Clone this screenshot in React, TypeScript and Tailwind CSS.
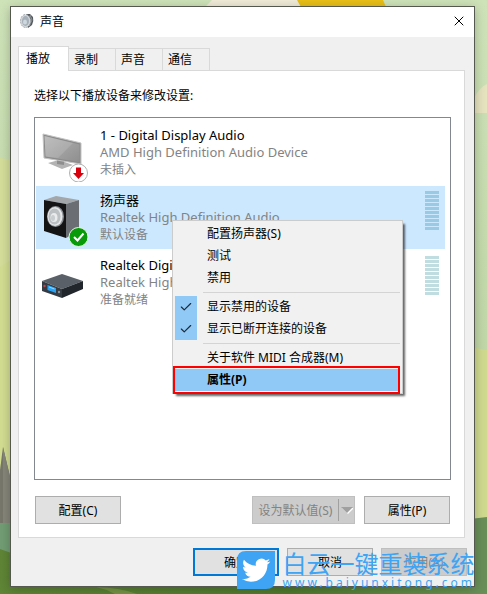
import { useState } from "react";
import type { ReactNode } from "react";
import { Check, X } from "lucide-react";

interface Device {
  id: string;
  name: string;
  driver: string;
  status: string;
  icon: ReactNode;
  meter?: string;
}

function Scenery() {
  return (
    <svg
      className="absolute inset-0 h-full w-full"
      viewBox="0 0 487 594"
      preserveAspectRatio="none"
      aria-hidden="true"
    >
      <defs>
        <linearGradient id="sky" x1="0" y1="0" x2="0" y2="1">
          <stop offset="0" stopColor="#cfe3b9" />
          <stop offset="1" stopColor="#b5ce9b" />
        </linearGradient>
        <linearGradient id="grass" x1="0" y1="0" x2="1" y2="0">
          <stop offset="0" stopColor="#5f8536" />
          <stop offset="0.6" stopColor="#4f7a2e" />
          <stop offset="1" stopColor="#6b9455" />
        </linearGradient>
      </defs>
      <rect width="487" height="594" fill="url(#sky)" />
      <path d="M212 0H298L301 7H205Z" fill="#f0ecd8" />
      <path d="M297 0H383L386 7H301Z" fill="#e9bf16" />
      <path d="M470 113Q474 90 487 84V113Z" fill="#e6e3bf" />
      <path d="M0 158L20 161V594H0Z" fill="#d5de9a" />
      <path d="M0 267L20 255V594H0Z" fill="#d3dd92" />
      <path d="M470 347L487 350V530H470Z" fill="#d0da8f" />
      <path d="M0 470L3 447L12 485V530H0Z" fill="#77776b" />
      <path d="M3 447L12 485V530H3Z" fill="#86867a" />
      <rect y="523" width="20" height="40" fill="#729d73" />
      <path d="M0 549L20 556L487 560V594H0Z" fill="url(#grass)" />
      <path d="M470 519L487 517V594H470Z" fill="#698f58" />
      <path d="M96 587Q122 588 137 594H115Q106 589 96 587Z" fill="#759445" />
    </svg>
  );
}

function SoundIcon() {
  return (
    <svg className="h-4 w-4" viewBox="0 0 16 16" aria-hidden="true">
      <path d="M7 1L11 1L14 4Q15 8 13 12L9 15Z" fill="#54595d" />
      <path d="M11 2L13 7L10 13" fill="none" stroke="#8d9498" />
      <ellipse cx="6.500" cy="8" rx="5" ry="6.500" fill="#d3d8dc" stroke="#a3a9ad" strokeDasharray="2 1" />
      <ellipse cx="6.500" cy="8" rx="3.500" ry="5" fill="#a6b0b8" />
      <ellipse cx="6" cy="9" rx="2" ry="2.500" fill="#cdd8df" />
    </svg>
  );
}

function MonitorIcon() {
  return (
    <svg className="h-[52px] w-12" viewBox="0 0 48 52" aria-hidden="true">
      <defs>
        <linearGradient id="screen" x1="0" y1="0" x2="1" y2="1">
          <stop offset="0" stopColor="#b5b5b5" />
          <stop offset="0.5" stopColor="#a2a2a2" />
          <stop offset="1" stopColor="#8f8f8f" />
        </linearGradient>
      </defs>
      <path d="M6 33L17 30L31 35L20 39Z" fill="#b3b3b3" />
      <path d="M15 27L22 29V35L15 34Z" fill="#8e8e8e" />
      <path d="M1 4L39 13V34L2 28Z" fill="#8b8b8b" stroke="#c4c4c4" />
      <path d="M2.500 6L37.500 14.500V32L3.500 26.500Z" fill="url(#screen)" />
      <path d="M2.500 6L31 13L16 28L3.500 26.500Z" fill="#fff" opacity="0.13" />
      <circle cx="36.500" cy="43" r="9" fill="#fff" stroke="#b0b0b0" />
      <path d="M34 37.500H39V43H42L36.500 49L31 43H34Z" fill="#d8000c" />
    </svg>
  );
}

function SpeakerIcon() {
  return (
    <svg className="h-[52px] w-12" viewBox="0 0 48 52" aria-hidden="true">
      <path d="M2 5L14 1L37 5L24 9Z" fill="#a4a7aa" />
      <path d="M24 9L37 5V36L24 43Z" fill="#6b6f74" />
      <path d="M2 5L24 9V43L2 36Z" fill="#141414" />
      <ellipse cx="13.500" cy="21.500" rx="8.500" ry="10.500" fill="#8e9296" />
      <ellipse cx="13" cy="21.500" rx="7.500" ry="9.500" fill="#e5e7e8" />
      <ellipse cx="12.500" cy="21.500" rx="6" ry="8" fill="#bcc0c3" />
      <ellipse cx="12" cy="22.500" rx="3.500" ry="4.500" fill="#e9ebec" />
      <ellipse cx="11" cy="23" rx="2" ry="3" fill="#c9cdd0" />
      <circle cx="36.500" cy="42" r="9.500" fill="#089a08" stroke="#e9f4e6" />
      <path d="M32 42L35.500 45.500L41.500 38.500" fill="none" stroke="#fff" strokeWidth="2" />
    </svg>
  );
}

function ReceiverIcon() {
  return (
    <svg className="h-[52px] w-12" viewBox="0 0 48 52" aria-hidden="true">
      <path d="M0 21L20 14L41 21L20 29Z" fill="#596067" />
      <path d="M0 21L20 29V38L0 31Z" fill="#343b42" />
      <path d="M20 29L41 21V29L20 38Z" fill="#20262c" />
      <path d="M5.500 25L14 28V33L5.500 30Z" fill="#2ba3f5" />
      <path d="M7 27L12.500 29" stroke="#9bd6ff" />
      <circle cx="2.500" cy="26" r="1.200" fill="#b34a4f" />
      <circle cx="17" cy="32" r="1.200" fill="#8a9299" />
    </svg>
  );
}

function LevelMeter({ color }: { color: string }) {
  return (
    <div className="mt-[5px] flex w-[14px] flex-col gap-px" aria-hidden="true">
      {Array.from({ length: 10 }, (_, i) => (
        <div key={i} className={`h-[3px] ${color}`} />
      ))}
    </div>
  );
}

function ContextMenu() {
  const [showDisabled, setShowDisabled] = useState(true);
  const [showDisconnected, setShowDisconnected] = useState(true);

  const toggles = [
    { label: "显示禁用的设备", checked: showDisabled, toggle: () => setShowDisabled(!showDisabled) },
    { label: "显示已断开连接的设备", checked: showDisconnected, toggle: () => setShowDisconnected(!showDisconnected) },
  ];

  return (
    <div
      role="menu"
      className="absolute top-[102px] left-[137px] z-10 flex w-[231px] flex-col border border-[#ccc] bg-[#f1f1f1] p-0.5 shadow-[3px_3px_2px_-1px_rgba(0,0,0,0.6)]"
    >
      {["配置扬声器(S)", "测试", "禁用"].map((label) => (
        <button key={label} role="menuitem" className="h-[22px] pb-0.5 pl-8 text-left">
          {label}
        </button>
      ))}
      <div role="separator" className="my-[3px] ml-7 h-px bg-[#d4d4d4]" />
      {toggles.map((item) => (
        <button
          key={item.label}
          role="menuitemcheckbox"
          aria-checked={item.checked}
          onClick={item.toggle}
          className="flex h-[22px] items-center gap-2.5 text-left"
        >
          <span className={`flex h-full w-[22px] items-center justify-center ${item.checked ? "bg-[#90c8f6]" : ""}`}>
            {item.checked && <Check className="h-3.5 w-3.5 text-[#1c2a38]" />}
          </span>
          <span className="pb-0.5">{item.label}</span>
        </button>
      ))}
      <div role="separator" className="my-[3px] ml-7 h-px bg-[#d4d4d4]" />
      <button role="menuitem" className="h-[22px] pb-0.5 pl-8 text-left">
        关于软件 MIDI 合成器(M)
      </button>
      <button role="menuitem" className="relative h-[22px] bg-[#90c8f6] pb-0.5 pl-8 text-left font-bold">
        属性(P)
        <span className="absolute -inset-y-[3px] right-0 -left-0.5 border-2 border-[#ff0000]" />
      </button>
    </div>
  );
}

function Watermark() {
  return (
    <div className="pointer-events-none absolute right-3 bottom-[5px] z-20 flex items-center gap-2 text-[#3ea4f3]">
      <svg className="h-[38px] w-[38px]" viewBox="0 0 38 38" aria-hidden="true">
        <path d="M9 0H38V29Q38 38 29 38H0V9Q0 0 9 0Z" fill="#3ea4f3" />
        <path
          transform="translate(5 5) scale(1.180)"
          fill="#fff"
          d="M23.953 4.570a10 10 0 01-2.825.775 4.958 4.958 0 002.163-2.723c-.951.555-2.005.959-3.127 1.184a4.920 4.920 0 00-8.384 4.482C7.690 8.095 4.067 6.130 1.640 3.162a4.822 4.822 0 00-.666 2.475c0 1.710.870 3.213 2.188 4.096a4.904 4.904 0 01-2.228-.616v.060a4.923 4.923 0 003.946 4.827 4.996 4.996 0 01-2.212.085 4.936 4.936 0 004.604 3.417 9.867 9.867 0 01-6.102 2.105c-.390 0-.779-.023-1.170-.067a13.995 13.995 0 007.557 2.209c9.053 0 13.998-7.496 13.998-13.985 0-.210 0-.420-.015-.630A9.935 9.935 0 0024 4.590z"
        />
      </svg>
      <div>
        <div className="text-[24px] leading-[26px]">白云一键重装系统</div>
        <div className="text-[12px] leading-[12px] tracking-[3px]">www.baiyunxitong.com</div>
      </div>
    </div>
  );
}

const tabs = ["播放", "录制", "声音", "通信"];

const devices: Device[] = [
  {
    id: "display",
    name: "1 - Digital Display Audio",
    driver: "AMD High Definition Audio Device",
    status: "未插入",
    icon: <MonitorIcon />,
  },
  {
    id: "speaker",
    name: "扬声器",
    driver: "Realtek High Definition Audio",
    status: "默认设备",
    icon: <SpeakerIcon />,
    meter: "bg-[#99c9e3]",
  },
  {
    id: "digital",
    name: "Realtek Digital Output",
    driver: "Realtek High Definition Audio",
    status: "准备就绪",
    icon: <ReceiverIcon />,
    meter: "bg-[#c0dde2]",
  },
];

export default function App() {
  const [activeTab, setActiveTab] = useState("播放");
  const [selected, setSelected] = useState("speaker");

  const buttonBase = "h-7 w-[86px] border border-[#adadad] bg-[#e1e1e1]";

  return (
    <div className="relative flex min-h-screen flex-col overflow-hidden pt-1.5 pr-3 pb-[7px] pl-2.5 font-['Noto_Sans','Noto_Sans_CJK_SC',sans-serif] text-[12px] leading-[17px] text-black">
      <Scenery />

      <main className="relative flex flex-1 flex-col border border-[#55584f] bg-[#f0f0f0] shadow-[0_2px_10px_rgba(0,0,0,0.25)]">
        {/* Title bar */}
        <header className="flex h-[30px] items-center gap-[5px] bg-white pr-[7px] pb-0.5 pl-2">
          <SoundIcon />
          <h1 className="flex-1">声音</h1>
          <button aria-label="关闭">
            <X className="h-4 w-4" strokeWidth={1.5} />
          </button>
        </header>

        <div className="flex flex-1 flex-col pt-[9px] pr-[9px] pl-[7px]">
          {/* Tabs */}
          <div role="tablist" className="flex items-end">
            {tabs.map((tab) => (
              <button
                key={tab}
                role="tab"
                aria-selected={tab === activeTab}
                onClick={() => setActiveTab(tab)}
                className={
                  tab === activeTab
                    ? "relative z-10 -mb-px h-[25px] w-[51px] border border-b-0 border-[#d9d9d9] bg-white pb-0.5 pl-[7px] text-left"
                    : "h-[22px] w-[47px] border-t border-r border-[#d9d9d9] pl-[5px] text-left"
                }
              >
                {tab}
              </button>
            ))}
          </div>

          {/* Playback panel */}
          <section className="flex flex-1 flex-col border border-[#d9d9d9] bg-white pt-4 pr-[13px] pb-[13px] pl-[15px]">
            <p>选择以下播放设备来修改设置:</p>

            <div className="relative mt-[13px] flex-1 border border-[#828790] pt-[3px] pr-[5px] pl-px">
              <ul role="listbox" aria-label="播放设备" className="flex flex-col gap-0.5">
                {devices.map((device) => (
                  <li
                    key={device.id}
                    role="option"
                    aria-selected={device.id === selected}
                    onClick={() => setSelected(device.id)}
                    className={`flex h-[63px] gap-2.5 pr-1.5 pl-1.5 ${device.id === selected ? "bg-[#cce8ff]" : ""}`}
                  >
                    <div className="pt-[9px]">{device.icon}</div>
                    <div className="flex-1 pt-1.5">
                      <div className="text-[13px]">{device.name}</div>
                      <div className="text-[13px] text-[#838383]">{device.driver}</div>
                      <div className="text-[#838383]">{device.status}</div>
                    </div>
                    {device.meter && <LevelMeter color={device.meter} />}
                  </li>
                ))}
              </ul>
              <ContextMenu />
            </div>

            <div className="mt-4 flex gap-[9px] pr-px pl-px">
              <button className={buttonBase}>配置(C)</button>
              <div className="ml-auto flex h-7 w-[103px] border border-[#bfbfbf] bg-[#ccc] py-0.5 text-[#838383]">
                <button disabled className="flex-1 whitespace-nowrap">
                  设为默认值(S)
                </button>
                <button disabled aria-label="更多默认选项" className="flex w-4 items-center justify-center border-l border-[#a0a0a0]">
                  <svg className="h-2 w-3" viewBox="0 0 12 8" aria-hidden="true">
                    <path d="M1 2H13L7 8Z" fill="#fff" />
                    <path d="M0 1H12L6 7Z" fill="#a0a0a0" />
                  </svg>
                </button>
              </div>
              <button className={buttonBase}>属性(P)</button>
            </div>
          </section>
        </div>

        {/* Dialog buttons */}
        <footer className="flex justify-end gap-2 pt-2.5 pr-[7px] pb-2.5">
          <button className="h-7 w-[86px] border-2 border-[#0078d7] bg-[#e1e1e1]">确定</button>
          <button className={buttonBase}>取消</button>
          <button disabled className="h-7 w-[86px] border border-[#bfbfbf] bg-[#ccc] text-[#838383]">
            应用(A)
          </button>
        </footer>
      </main>

      <Watermark />
    </div>
  );
}
